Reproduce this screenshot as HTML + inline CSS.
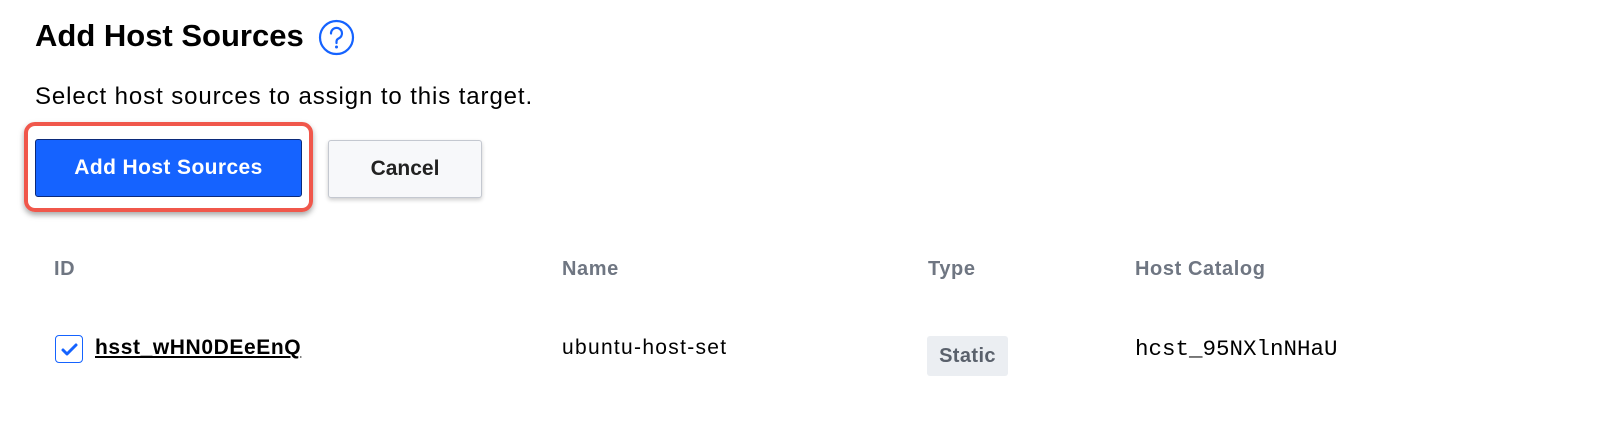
<!DOCTYPE html>
<html><head><style>
body{margin:0;width:1600px;height:446px;background:#fff;font-family:"Liberation Sans",sans-serif;position:relative;overflow:hidden}
.a{position:absolute;white-space:nowrap}
.h{top:258px;font-size:20px;font-weight:bold;color:#6f7682;letter-spacing:0.6px}
</style></head><body>
<div class="a" style="left:35px;top:18px;font-size:31px;font-weight:bold;color:#000">Add Host Sources</div>
<svg class="a" style="left:318px;top:19px" width="37" height="37" viewBox="0 0 37 37"><circle cx="18.5" cy="18.5" r="16.5" fill="none" stroke="#1563ff" stroke-width="2.2"/><path d="M13 14.5a5.5 5.5 0 1 1 7.5 5c-1.5.7-2 1.6-2 3v1.5" fill="none" stroke="#1563ff" stroke-width="2.2" stroke-linecap="round"/><circle cx="18.5" cy="28" r="1.5" fill="#1563ff"/></svg>
<div class="a" style="left:35px;top:83px;font-size:24px;color:#000;letter-spacing:0.9px">Select host sources to assign to this target.</div>
<div class="a" style="left:24px;top:122px;width:281px;height:82px;border:4px solid #f0574b;border-radius:11px;box-shadow:0 3px 6px rgba(0,0,0,.35)"></div>
<div class="a" style="left:35px;top:139px;width:265px;height:56px;background:#1563ff;border:1.5px solid #0b2a7a;border-radius:3px;color:#fff;font-weight:bold;font-size:21px;letter-spacing:0.4px;text-align:center;line-height:56px">Add Host Sources</div>
<div class="a" style="left:328px;top:140px;width:152px;height:56px;background:#f7f8fa;border:1px solid #c4c8d0;border-radius:3px;box-shadow:0 2px 4px rgba(0,0,0,.2);color:#222;font-weight:bold;font-size:21px;text-align:center;line-height:56px">Cancel</div>
<div class="a h" style="left:54px">ID</div>
<div class="a h" style="left:562px">Name</div>
<div class="a h" style="left:928px">Type</div>
<div class="a h" style="left:1135px">Host Catalog</div>
<div class="a" style="left:55px;top:335px;width:26px;height:26px;border:1.5px solid #1563ff;border-radius:4px"></div>
<svg class="a" style="left:55px;top:335px" width="29" height="29"><path d="M8 15l4 4 9-9" fill="none" stroke="#1563ff" stroke-width="3" stroke-linecap="round" stroke-linejoin="round"/></svg>
<div class="a" style="left:95px;top:336px;font-size:21px;font-weight:bold;color:#000;text-decoration:underline;letter-spacing:0.6px">hsst_wHN0DEeEnQ</div>
<div class="a" style="left:562px;top:336px;font-size:21px;color:#000;letter-spacing:1.3px">ubuntu-host-set</div>
<div class="a" style="left:927px;top:336px;width:81px;height:40px;background:#ebeef2;border-radius:3px;font-size:20px;font-weight:bold;color:#5a616c;text-align:center;line-height:40px;letter-spacing:0.4px">Static</div>
<div class="a" style="left:1135px;top:336px;font-size:22.5px;font-family:'Liberation Mono',monospace;color:#000">hcst_95NXlnNHaU</div>
</body></html>
